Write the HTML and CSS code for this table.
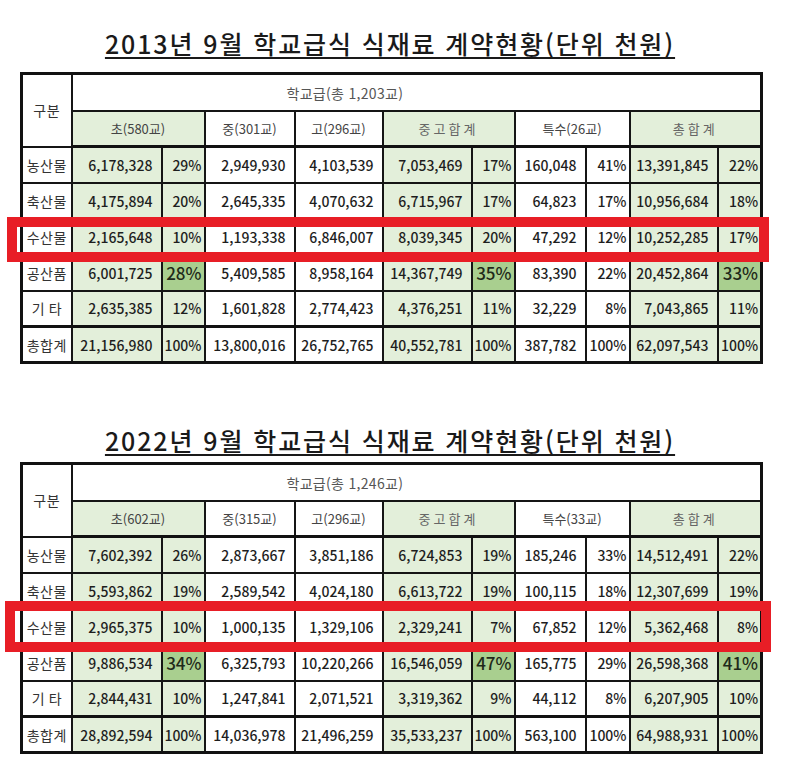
FILE: index.html
```html
<!DOCTYPE html>
<html lang="ko">
<head>
<meta charset="utf-8">
<title>학교급식 식재료 계약현황</title>
<link rel="stylesheet" href="styles.css">
</head>
<body>
<main class="page">
  <section class="report report-2013">
    <h1 class="title"><span>2013년 9월 학교급식 식재료 계약현황(단위 천원)</span></h1>
    <div class="table-wrap">
      <table class="sheet">
        <colgroup>
          <col class="c-label"><col class="c-num"><col class="c-pct"><col class="c-num"><col class="c-num2"><col class="c-num3"><col class="c-pct"><col class="c-num4"><col class="c-pct2"><col class="c-num2"><col class="c-pct2">
        </colgroup>
        <tr class="head1">
          <td class="label" rowspan="2">구분</td>
          <td class="school" colspan="10">학교급(총 1,203교)</td>
        </tr>
        <tr class="head2">
          <td class="g hd" colspan="2">초(580교)</td>
          <td class="hd">중(301교)</td>
          <td class="hd">고(296교)</td>
          <td class="g hd spaced" colspan="2">중고합계</td>
          <td class="hd" colspan="2">특수(26교)</td>
          <td class="g hd spaced" colspan="2">총합계</td>
        </tr>
        <tr>
          <td class="label">농산물</td>
          <td class="g n">6,178,328</td><td class="g p">29%</td>
          <td class="n">2,949,930</td><td class="n">4,103,539</td>
          <td class="g n">7,053,469</td><td class="g p">17%</td>
          <td class="n">160,048</td><td class="p">41%</td>
          <td class="g n">13,391,845</td><td class="g p">22%</td>
        </tr>
        <tr>
          <td class="label">축산물</td>
          <td class="g n">4,175,894</td><td class="g p">20%</td>
          <td class="n">2,645,335</td><td class="n">4,070,632</td>
          <td class="g n">6,715,967</td><td class="g p">17%</td>
          <td class="n">64,823</td><td class="p">17%</td>
          <td class="g n">10,956,684</td><td class="g p">18%</td>
        </tr>
        <tr>
          <td class="label">수산물</td>
          <td class="g n">2,165,648</td><td class="g p">10%</td>
          <td class="n">1,193,338</td><td class="n">6,846,007</td>
          <td class="g n">8,039,345</td><td class="g p">20%</td>
          <td class="n">47,292</td><td class="p">12%</td>
          <td class="g n">10,252,285</td><td class="g p">17%</td>
        </tr>
        <tr>
          <td class="label">공산품</td>
          <td class="g n">6,001,725</td><td class="hi p">28%</td>
          <td class="n">5,409,585</td><td class="n">8,958,164</td>
          <td class="g n">14,367,749</td><td class="hi p">35%</td>
          <td class="n">83,390</td><td class="p">22%</td>
          <td class="g n">20,452,864</td><td class="hi p">33%</td>
        </tr>
        <tr>
          <td class="label spaced">기타</td>
          <td class="g n">2,635,385</td><td class="g p">12%</td>
          <td class="n">1,601,828</td><td class="n">2,774,423</td>
          <td class="g n">4,376,251</td><td class="g p">11%</td>
          <td class="n">32,229</td><td class="p">8%</td>
          <td class="g n">7,043,865</td><td class="g p">11%</td>
        </tr>
        <tr class="total">
          <td class="label">총합계</td>
          <td class="g n">21,156,980</td><td class="g p">100%</td>
          <td class="n">13,800,016</td><td class="n">26,752,765</td>
          <td class="g n">40,552,781</td><td class="g p">100%</td>
          <td class="n">387,782</td><td class="p">100%</td>
          <td class="g n">62,097,543</td><td class="g p">100%</td>
        </tr>
      </table>
      <div class="mark mark-2013"></div>
    </div>
  </section>

  <section class="report report-2022">
    <h1 class="title"><span>2022년 9월 학교급식 식재료 계약현황(단위 천원)</span></h1>
    <div class="table-wrap">
      <table class="sheet">
        <colgroup>
          <col class="c-label"><col class="c-num"><col class="c-pct"><col class="c-num"><col class="c-num2"><col class="c-num3"><col class="c-pct"><col class="c-num4"><col class="c-pct2"><col class="c-num2"><col class="c-pct2">
        </colgroup>
        <tr class="head1">
          <td class="label" rowspan="2">구분</td>
          <td class="school" colspan="10">학교급(총 1,246교)</td>
        </tr>
        <tr class="head2">
          <td class="g hd" colspan="2">초(602교)</td>
          <td class="hd">중(315교)</td>
          <td class="hd">고(296교)</td>
          <td class="g hd spaced" colspan="2">중고합계</td>
          <td class="hd" colspan="2">특수(33교)</td>
          <td class="g hd spaced" colspan="2">총합계</td>
        </tr>
        <tr>
          <td class="label">농산물</td>
          <td class="g n">7,602,392</td><td class="g p">26%</td>
          <td class="n">2,873,667</td><td class="n">3,851,186</td>
          <td class="g n">6,724,853</td><td class="g p">19%</td>
          <td class="n">185,246</td><td class="p">33%</td>
          <td class="g n">14,512,491</td><td class="g p">22%</td>
        </tr>
        <tr>
          <td class="label">축산물</td>
          <td class="g n">5,593,862</td><td class="g p">19%</td>
          <td class="n">2,589,542</td><td class="n">4,024,180</td>
          <td class="g n">6,613,722</td><td class="g p">19%</td>
          <td class="n">100,115</td><td class="p">18%</td>
          <td class="g n">12,307,699</td><td class="g p">19%</td>
        </tr>
        <tr>
          <td class="label">수산물</td>
          <td class="g n">2,965,375</td><td class="g p">10%</td>
          <td class="n">1,000,135</td><td class="n">1,329,106</td>
          <td class="g n">2,329,241</td><td class="g p">7%</td>
          <td class="n">67,852</td><td class="p">12%</td>
          <td class="g n">5,362,468</td><td class="g p">8%</td>
        </tr>
        <tr>
          <td class="label">공산품</td>
          <td class="g n">9,886,534</td><td class="hi p">34%</td>
          <td class="n">6,325,793</td><td class="n">10,220,266</td>
          <td class="g n">16,546,059</td><td class="hi p">47%</td>
          <td class="n">165,775</td><td class="p">29%</td>
          <td class="g n">26,598,368</td><td class="hi p">41%</td>
        </tr>
        <tr>
          <td class="label spaced">기타</td>
          <td class="g n">2,844,431</td><td class="g p">10%</td>
          <td class="n">1,247,841</td><td class="n">2,071,521</td>
          <td class="g n">3,319,362</td><td class="g p">9%</td>
          <td class="n">44,112</td><td class="p">8%</td>
          <td class="g n">6,207,905</td><td class="g p">10%</td>
        </tr>
        <tr class="total">
          <td class="label">총합계</td>
          <td class="g n">28,892,594</td><td class="g p">100%</td>
          <td class="n">14,036,978</td><td class="n">21,496,259</td>
          <td class="g n">35,533,237</td><td class="g p">100%</td>
          <td class="n">563,100</td><td class="p">100%</td>
          <td class="g n">64,988,931</td><td class="g p">100%</td>
        </tr>
      </table>
      <div class="mark mark-2022"></div>
    </div>
  </section>
</main>
</body>
</html>
```

FILE: styles.css
```css
* { box-sizing: border-box; }

html, body {
  margin: 0;
  padding: 0;
  background: #ffffff;
}

body {
  font-family: "Noto Sans CJK KR", "Noto Sans", sans-serif;
  color: #222;
}

.page {
  width: 787px;
  display: flex;
  flex-direction: column;
  padding: 28px 0 0 20px;
}

.report {
  display: flex;
  flex-direction: column;
}

.report-2013 .title { margin-bottom: 14px; }

.report-2022 {
  margin-top: 61px;
}

.report-2022 .title { margin-bottom: 7px; }

.title {
  margin: 0;
  width: 740px;
  text-align: center;
  font-size: 25px;
  font-weight: 500;
  line-height: 30px;
  color: #1a1a1a;
  letter-spacing: 1.9px;
}

.title span {
  text-decoration: underline;
  text-decoration-thickness: 2px;
  text-underline-offset: 3px;
}

.table-wrap {
  position: relative;
  width: 740px;
}

.sheet {
  width: 740px;
  table-layout: fixed;
  border-collapse: collapse;
  border: 3px solid #111;
  font-size: 14px;
  line-height: 1;
}

.c-label { width: 50px; }
.c-num { width: 90px; }
.c-pct { width: 43px; }
.c-num2 { width: 88px; }
.c-num3 { width: 89px; }
.c-num4 { width: 71px; }
.c-pct2 { width: 44px; }

.sheet td {
  border: 2px solid #151515;
  padding: 0;
  vertical-align: middle;
  background: #ffffff;
  white-space: nowrap;
  color: #1e1e1e;
}

.sheet tr { height: 36px; }
.sheet tr.head1 { height: 37px; }
.sheet tr.head2 { height: 36px; }

.sheet tr.head2 td { border-bottom: 3px solid #111; }
.sheet tr.total td { border-top: 3px solid #111; }

.sheet td.g { background: #e3efda; }
.sheet td.hi {
  background: #a9cf8f;
  font-size: 17px;
  color: #1f2a1a;
}

.sheet td.label {
  text-align: center;
  font-size: 14px;
  color: #333;
  letter-spacing: 0.5px;
}

.sheet td.label.spaced { letter-spacing: 4px; padding-left: 4px; }

.sheet td.school {
  text-align: left;
  padding-left: 214px;
  padding-top: 1px;
  font-size: 14px;
  color: #555;
  letter-spacing: 0.3px;
}

.sheet td.hd {
  text-align: center;
  font-size: 13px;
  color: #444;
}

.sheet td.hd.spaced {
  letter-spacing: 3px;
  color: #666;
}

.sheet td.n {
  text-align: right;
  padding-right: 8px;
  font-weight: 500;
}

.sheet td.p {
  text-align: right;
  padding-right: 2px;
  font-weight: 500;
}

.mark {
  position: absolute;
  border: 10px solid #e81e26;
  pointer-events: none;
}

.mark-2013 {
  left: -13px;
  top: 145px;
  width: 762px;
  height: 45px;
}

.mark-2022 {
  left: -15px;
  top: 139px;
  width: 766px;
  height: 51px;
}
```
